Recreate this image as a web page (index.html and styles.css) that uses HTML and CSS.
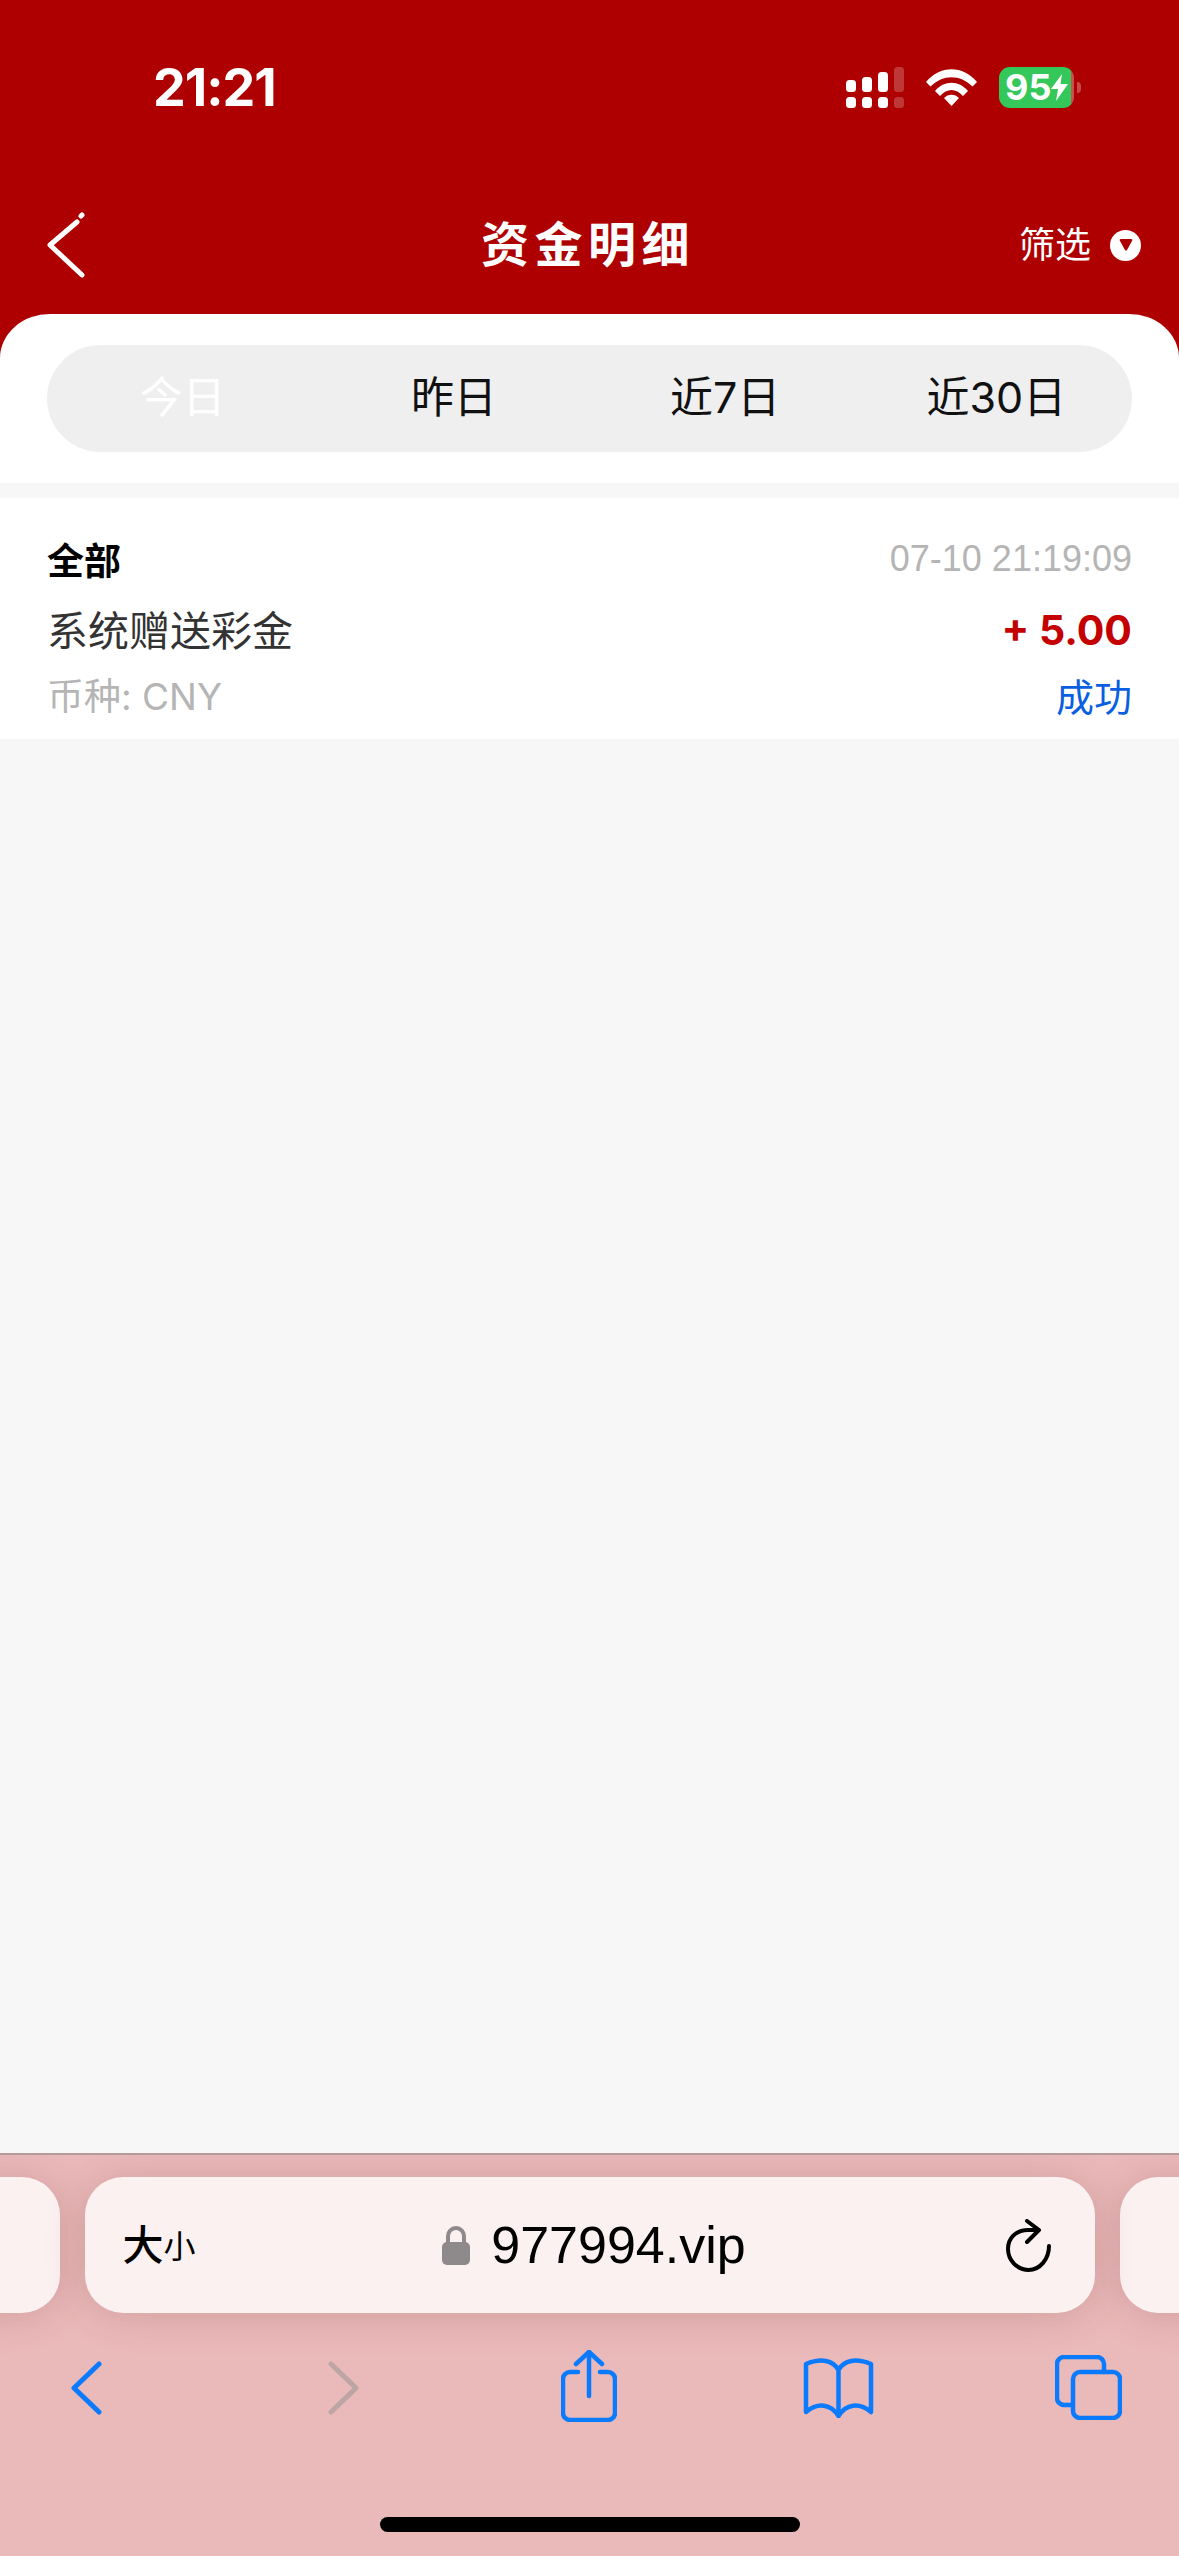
FILE: index.html
```html
<!DOCTYPE html>
<html lang="zh-CN">
<head>
<meta charset="utf-8">
<title>资金明细</title>
<link rel="stylesheet" href="styles.css">
</head>
<body>
<div class="page">
  <header class="top">
    <div class="status">
      <span class="time">21:21</span>
      <div class="status-icons">
        <svg class="signal" width="58" height="41" viewBox="0 0 58 41" fill="#fff">
          <rect x="0" y="13" width="10" height="12" rx="3.5"/><rect x="16" y="10" width="10" height="15" rx="3.5"/><rect x="32" y="5" width="10" height="20" rx="3.5"/>
          <rect x="48" y="0" width="10" height="25" rx="3.5" opacity=".22"/>
          <rect x="0" y="30" width="10" height="11" rx="3.5"/><rect x="16" y="30" width="10" height="11" rx="3.5"/><rect x="32" y="30" width="10" height="11" rx="3.5"/>
          <rect x="48" y="30" width="10" height="11" rx="3.5" opacity=".22"/>
        </svg>
        <svg class="wifi" width="51" height="37" viewBox="0 0 51 37" fill="#fff">
          <path d="M0 13 C14 -4 37 -4 51 13 L46.500 17.500 C34 5 17 5 4.500 17.500Z"/>
          <path d="M9 22 C18 11 33 11 42 22 L37 27 C30 19 21 19 14 27Z"/>
          <path d="M18 29 C22 24.500 29 24.500 33 29 L25.500 37Z"/>
        </svg>
        <div class="battery"><span class="batt-num">95</span><svg class="bolt" width="17" height="27" viewBox="0 0 17 27" fill="#fff"><path d="M11 0 L0 15 H7 L5 27 L17 10 H9.500Z"/></svg></div>
      </div>
    </div>
    <nav class="nav">
      <svg class="back" width="38" height="66" viewBox="0 0 38 66" fill="none" stroke="#fff" stroke-width="5" stroke-linecap="round" stroke-linejoin="round"><path d="M30 10 L3 33 L35 63"/><path d="M34 4 L35 3"/></svg>
      <h1 class="title">资金明细</h1>
      <div class="filter"><span>筛选</span><span class="filter-dot"><svg width="14" height="12" viewBox="0 0 14 12"><path d="M1 2 Q0 0 2 0 H12 Q14 0 13 2 L8 11 Q7 12 6 11Z" fill="#ae0000"/></svg></span></div>
    </nav>
  </header>

  <main class="content">
    <section class="panel">
      <div class="tabs">
        <div class="tab tab-active">今日</div>
        <div class="tab">昨日</div>
        <div class="tab">近7日</div>
        <div class="tab">近30日</div>
      </div>
    </section>
    <article class="record">
      <div class="row row-1"><span class="kind">全部</span><span class="date">07-10 21:19:09</span></div>
      <div class="row row-2"><span class="desc">系统赠送彩金</span><span class="amount">+ 5.00</span></div>
      <div class="row row-3"><span class="currency">币种: CNY</span><span class="state">成功</span></div>
    </article>
  </main>

  <footer class="toolbar">
    <div class="address-row">
      <div class="pill"></div>
      <div class="pill pill-main">
        <span class="aa"><span class="aa-big">大</span><span class="aa-small">小</span></span>
        <span class="url">
          <svg class="lock" width="28" height="39" viewBox="0 0 28 39"><path d="M6 18 V10 A8 8 0 0 1 22 10 V18" fill="none" stroke="#8e898b" stroke-width="4"/><rect x="0" y="16" width="28" height="23" rx="5" fill="#8e898b"/></svg>
          <span class="url-text">977994.vip</span>
        </span>
        <svg class="reload" width="45" height="53" viewBox="0 0 45 53" fill="none" stroke="#000" stroke-width="4" stroke-linecap="round" stroke-linejoin="round"><path d="M43 27 C43 40 34 51 22.500 51 C11 51 2 41 2 30 C2 19 10 11 22 11 L32 11"/><path d="M21 2 L33 11 L21 23"/></svg>
      </div>
      <div class="pill"></div>
    </div>
    <div class="actions">
      <svg width="31" height="54" viewBox="0 0 31 54" fill="none" stroke="#0a7aff" stroke-width="5" stroke-linecap="round" stroke-linejoin="round"><path d="M28 3 L3 27 L28 51"/></svg>
      <svg width="31" height="54" viewBox="0 0 31 54" fill="none" stroke="#bda5a5" stroke-width="5" stroke-linecap="round" stroke-linejoin="round"><path d="M3 3 L28 27 L3 51"/></svg>
      <svg width="56" height="72" viewBox="0 0 56 72" fill="none" stroke="#0a7aff" stroke-width="4.500" stroke-linecap="round" stroke-linejoin="round"><path d="M17 22 H9 A7 7 0 0 0 2 29 V63 A7 7 0 0 0 9 70 H47 A7 7 0 0 0 54 63 V29 A7 7 0 0 0 47 22 H39"/><path d="M28 46 V2"/><path d="M15 14 L28 2 L41 14"/></svg>
      <svg width="71" height="60" viewBox="0 0 71 60" fill="none" stroke="#0a7aff" stroke-width="4.500" stroke-linecap="round" stroke-linejoin="round"><path d="M35.500 58 V12 C30 2 18 0 3 6 V54 C15 44 28 46 35.500 58 C43 46 56 44 68 54 V6 C53 0 41 2 35.500 12"/></svg>
      <svg width="67" height="65" viewBox="0 0 67 65" fill="none" stroke="#0a7aff" stroke-width="4.500" stroke-linecap="round" stroke-linejoin="round"><path d="M49 17 V9 A7 7 0 0 0 42 2 H9 A7 7 0 0 0 2 9 V43 A7 7 0 0 0 9 50 H18"/><rect x="18" y="17" width="47" height="46" rx="7"/></svg>
    </div>
    <div class="home-wrap"><div class="home-bar"></div></div>
  </footer>
</div>
</body>
</html>
```
FILE: styles.css
```css
* { box-sizing: border-box; }
html, body { margin: 0; padding: 0; }
body { font-family: "Inter", "Noto Sans CJK SC", sans-serif; background: #f7f7f7; }
.page { width: 1179px; height: 2556px; display: flex; flex-direction: column; overflow: hidden; }

.top { height: 314px; background: #ae0000; color: #fff; flex: none; display: flex; flex-direction: column; }
.status { height: 176px; padding: 67px 98px 0 153px; display: flex; justify-content: space-between; align-items: flex-start; }
.time { font-size: 52px; line-height: 41px; font-weight: 700; letter-spacing: -1px; }
.status-icons { display: flex; align-items: flex-start; }
.signal { display: block; margin-right: 22px; }
.wifi { display: block; margin-top: 2px; margin-right: 22px; }
.battery { position: relative; width: 75px; height: 41px; margin-right: 7px; border-radius: 11px; padding-left: 6px; display: flex; align-items: center; background: linear-gradient(90deg, #34c759 0, #34c759 72px, #c9514f 72px); }
.battery::after { content: ""; position: absolute; right: -7px; top: 15px; width: 4px; height: 11px; background: #c9494a; border-radius: 0 4px 4px 0; }
.batt-num { font-size: 36px; line-height: 41px; font-weight: 700; color: #fff; }
.bolt { display: block; }

.nav { flex: 1; display: grid; grid-template-columns: 1fr auto 1fr; align-items: center; padding: 0 50px 0 47px; }
.back { display: block; }
.title { margin: 0; font-size: 48px; line-height: 60px; font-weight: 700; letter-spacing: 5.5px; }
.filter { justify-self: end; margin-right: -12px; display: flex; align-items: center; gap: 19px; font-size: 36px; line-height: 50px; }
.filter-dot { width: 31px; height: 31px; border-radius: 50%; background: #fff; display: flex; align-items: center; justify-content: center; }
.filter-dot svg { display: block; }

.content { flex: 1; background: linear-gradient(#ae0000 0, #ae0000 60px, #f7f7f7 60px); }
.panel { background: #fff; height: 169px; padding: 31px 47px 0; border-radius: 50px 50px 0 0 / 44px 44px 0 0; }
.tabs { height: 107px; padding-bottom: 3px; border-radius: 54px; background: #efefef; display: grid; grid-template-columns: repeat(4, 1fr); align-items: center; text-align: center; font-size: 43px; line-height: 60px; color: #111; }
.tab-active { color: #fff; }

.record { margin-top: 15px; height: 241px; background: #fff; padding: 36px 47px 0; display: flex; flex-direction: column; }
.row { display: flex; justify-content: space-between; align-items: center; height: 50px; }
.row-2 { margin-top: 19px; }
.row-3 { margin-top: 16px; }
.kind { font-size: 37px; font-weight: 700; color: #000; }
.date { font-size: 36px; color: #b5b5b5; font-family: "Liberation Sans", "Noto Sans CJK SC", sans-serif; }
.desc { font-size: 41px; color: #333; }
.amount { font-size: 41px; font-weight: 700; color: #c40000; margin-top: 4px; }
.currency { font-size: 37px; color: #b5b5b5; }
.state { font-size: 38px; color: #0a5fe0; }

.toolbar { height: 403px; flex: none; background: #eab9b9; border-top: 2px solid #b59a9a; display: flex; flex-direction: column; overflow: hidden; }
.address-row { display: flex; justify-content: center; gap: 25px; margin-top: 22px; height: 136px; flex: none; }
.pill { flex: none; width: 1010px; height: 136px; background: #fbf1f0; border-radius: 38px; box-shadow: 0 2px 40px rgba(110, 50, 50, .2); }
.pill-main { display: flex; align-items: center; justify-content: space-between; padding: 0 43px 0 38px; position: relative; }
.aa { display: flex; align-items: flex-end; color: #000; width: 75px; }
.aa-big { font-size: 41px; line-height: 44px; font-weight: 500; }
.aa-small { font-size: 32px; line-height: 40px; font-weight: 400; }
.url { display: flex; align-items: center; gap: 21px; margin-right: 16px; }
.lock { display: block; }
.url-text { font-size: 52px; line-height: 60px; color: #000; font-family: "Liberation Sans", sans-serif; }
.reload { display: block; }

.actions { display: grid; grid-template-columns: 31px 31px 56px 71px 67px; justify-content: start; height: 72px; margin-top: 37px; align-items: center; padding-left: 71px; }
.actions svg { display: block; margin-top: 3px; }
.actions svg:nth-child(2) { margin-left: 226px; }
.actions svg:nth-child(3) { margin-left: 428px; margin-top: 0; }
.actions svg:nth-child(4) { margin-left: 614px; }
.actions svg:nth-child(5) { margin-left: 795px; }
.home-wrap { flex: 1; display: flex; justify-content: center; padding-top: 95px; }
.home-bar { width: 420px; height: 15px; border-radius: 8px; background: #000; }
```
